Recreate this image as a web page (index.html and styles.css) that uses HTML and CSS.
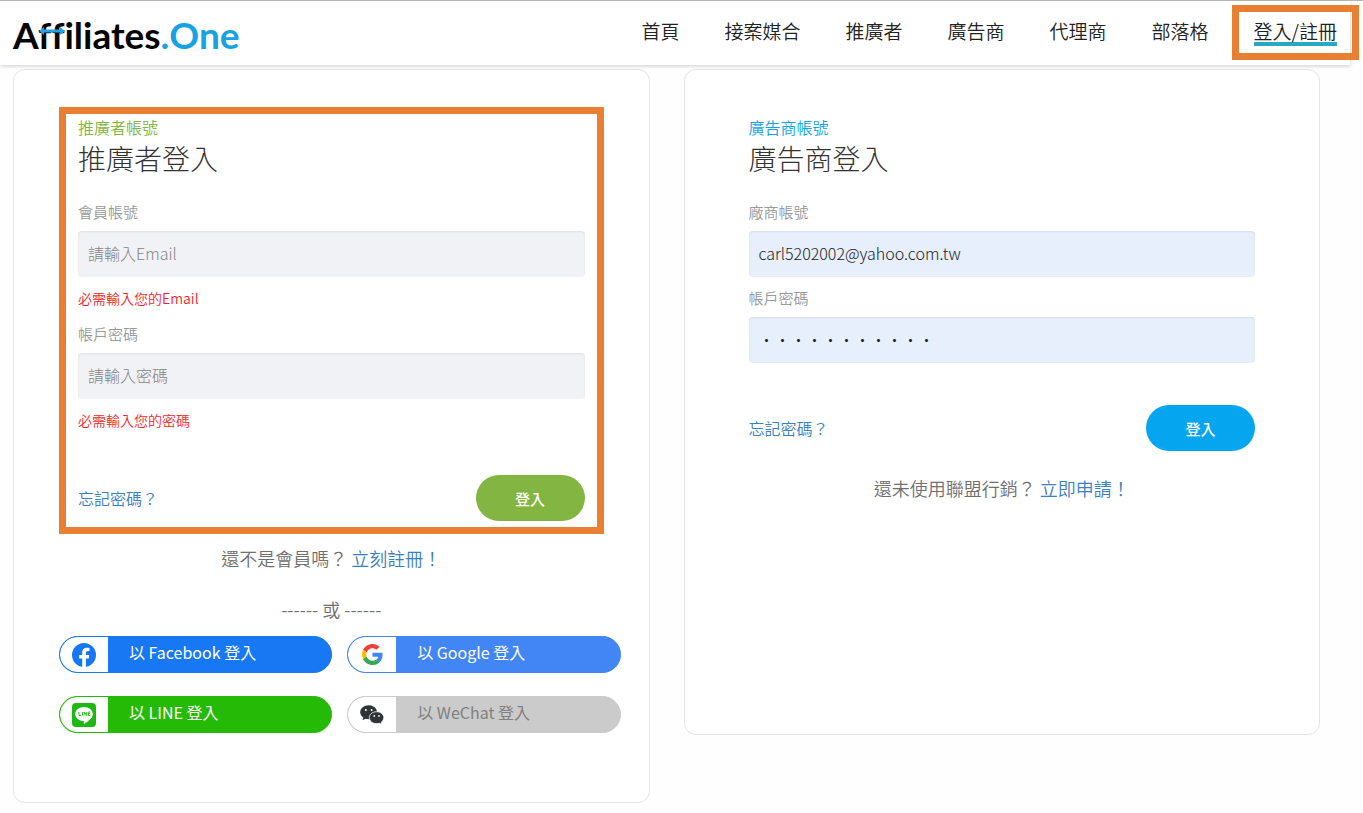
FILE: index.html
```html
<!DOCTYPE html>
<html lang="zh-Hant">
<head>
<meta charset="utf-8">
<meta name="viewport" content="width=device-width, initial-scale=1">
<title>Affiliates.One 登入</title>
<link rel="stylesheet" href="styles.css">
</head>
<body>
<header class="site-header">
  <a class="logo" href="#">
    <span class="logo-name">Affiliates</span><span class="logo-accent">.</span><span class="logo-accent logo-one">One</span>
    <svg class="logo-arrow" viewBox="0 0 26 8" aria-hidden="true"><path d="M0 4 5 0v2.500h16V0l5 4-5 4V5.500H5V8z" fill="#2b9fe6"/></svg>
  </a>
  <nav class="nav">
    <a href="#">首頁</a>
    <a href="#">接案媒合</a>
    <a href="#">推廣者</a>
    <a href="#">廣告商</a>
    <a href="#">代理商</a>
    <a href="#">部落格</a>
    <a class="nav-login" href="#"><span>登入/註冊</span></a>
  </nav>
</header>
<main class="cards">
  <section class="card">
    <form class="login login-marked">
      <p class="eyebrow eyebrow-green">推廣者帳號</p>
      <h1 class="title">推廣者登入</h1>
      <label class="label" for="member">會員帳號</label>
      <input class="input" id="member" type="text" placeholder="請輸入Email">
      <p class="error">必需輸入您的Email</p>
      <label class="label" for="member-pass">帳戶密碼</label>
      <input class="input" id="member-pass" type="password" placeholder="請輸入密碼">
      <p class="error">必需輸入您的密碼</p>
      <div class="actions actions-member">
        <a class="link" href="#">忘記密碼？</a>
        <button class="submit submit-green" type="button">登入</button>
      </div>
    </form>
    <p class="signup">還不是會員嗎？ <a class="link" href="#">立刻註冊！</a></p>
    <p class="or">------ 或 ------</p>
    <div class="socials">
      <button class="social facebook" type="button">
        <span class="social-icon"><svg viewBox="0 0 24 24" aria-hidden="true"><circle cx="12" cy="12" r="12" fill="#1877f2"/><path fill="#fff" d="M16.700 15.500l.5-3.500h-3.300V9.800c0-.9.500-1.900 2-1.900h1.500v-3s-1.400-.2-2.700-.2c-2.700 0-4.500 1.700-4.500 4.700V12h-3v3.500h3v8.400a12 12 0 0 0 3.700 0v-8.400z"/></svg></span>
        <span class="social-text">以 Facebook 登入</span>
      </button>
      <button class="social google" type="button">
        <span class="social-icon"><svg viewBox="0 0 48 48" aria-hidden="true"><path fill="#ea4335" d="M24 9.500c3.540 0 6.710 1.220 9.210 3.600l6.850-6.850C35.900 2.380 30.470 0 24 0 14.620 0 6.510 5.380 2.560 13.220l7.980 6.190C12.430 13.720 17.740 9.500 24 9.500z"/><path fill="#4285f4" d="M46.980 24.550c0-1.570-.15-3.090-.38-4.550H24v9.020h12.940c-.58 2.960-2.260 5.480-4.780 7.180l7.730 6c4.510-4.180 7.090-10.360 7.090-17.650z"/><path fill="#fbbc05" d="M10.530 28.590A14.500 14.500 0 0 1 9.770 24c0-1.600.27-3.140.76-4.590l-7.980-6.190A23.900 23.900 0 0 0 0 24c0 3.880.92 7.540 2.560 10.780z"/><path fill="#34a853" d="M24 48c6.480 0 11.930-2.130 15.890-5.810l-7.730-6c-2.150 1.450-4.920 2.300-8.160 2.300-6.260 0-11.570-4.220-13.470-9.910l-7.980 6.190C6.510 42.620 14.620 48 24 48z"/></svg></span>
        <span class="social-text">以 Google 登入</span>
      </button>
      <button class="social line" type="button">
        <span class="social-icon"><svg viewBox="0 0 24 24" aria-hidden="true"><rect width="24" height="24" rx="4" fill="#1db812"/><path fill="#fff" d="M12 4c5 0 8.800 3.100 8.800 7 0 4.500-5.600 7.900-8.300 9.700-.9.500-.8-.4-.7-1.300.1-1-.2-1.300-1-1.400-4.200-.5-7.600-3.400-7.600-7C3.200 7.100 7 4 12 4z"/><path d="M7 9v3.500h2M10.500 9v3.500M12.300 12.500V9l2.400 3.500V9M18.200 9h-1.900v3.500h1.900M16.300 10.700h1.700" fill="none" stroke="#1db812" stroke-width=".9"/></svg></span>
        <span class="social-text">以 LINE 登入</span>
      </button>
      <button class="social wechat" type="button">
        <span class="social-icon"><svg viewBox="0 0 24 24" aria-hidden="true"><path fill="#2e3438" d="M8.800 2.300C4 2.300.2 5.300.2 9.200c0 2.200 1.200 4.100 3.200 5.400l-.9 2.600 3-1.500c1.100.3 2.100.5 3.300.5C13.600 16.200 17 13 17 9.200s-3.600-6.900-8.200-6.900z"/><path fill="#2e3438" stroke="#fff" stroke-width=".8" d="M16.600 8.700c4.100 0 7.200 2.700 7.200 6 0 1.800-1 3.400-2.500 4.500l.6 2.300-2.500-1.300c-.9.300-1.800.4-2.800.4-4.100 0-7.300-2.600-7.300-5.900s3.200-6 7.300-6z"/><g fill="#fff"><circle cx="5.900" cy="6.900" r="1"/><circle cx="11.600" cy="6.900" r="1"/><circle cx="14.300" cy="12.900" r=".9"/><circle cx="19" cy="12.900" r=".9"/></g></svg></span>
        <span class="social-text">以 WeChat 登入</span>
      </button>
    </div>
  </section>
  <section class="card card-vendor">
    <form class="login">
      <p class="eyebrow eyebrow-blue">廣告商帳號</p>
      <h1 class="title">廣告商登入</h1>
      <label class="label" for="vendor">廠商帳號</label>
      <input class="input input-filled" id="vendor" type="text" value="carl5202002@yahoo.com.tw">
      <label class="label label-next" for="vendor-pass">帳戶密碼</label>
      <input class="input input-filled" id="vendor-pass" type="password" value="password123">
      <div class="actions">
        <a class="link" href="#">忘記密碼？</a>
        <button class="submit submit-blue" type="button">登入</button>
      </div>
    </form>
    <p class="signup">還未使用聯盟行銷？ <a class="link" href="#">立即申請！</a></p>
  </section>
</main>
</body>
</html>
```
FILE: styles.css
```css
* { box-sizing: border-box; }
body {
  margin: 0;
  border-top: 1px solid #b4b4b4;
  background: #fefefe;
  color: #707070;
  font-family: "Noto Sans CJK TC", sans-serif;
  font-size: 16px;
  font-weight: 350;
}
p, h1 { margin: 0; font-weight: inherit; }
a { text-decoration: none; }
button, input { font: inherit; }

.site-header {
  display: flex;
  justify-content: space-between;
  align-items: flex-start;
  height: 64px;
  margin-right: 13px;
  padding-left: 13px;
  background: #fff;
  box-shadow: 0 1px 4px rgba(0, 0, 0, .2);
}
.logo {
  position: relative;
  display: flex;
  align-items: baseline;
  padding-top: 11px;
  color: #050505;
  font: 700 37px/46px Lato, sans-serif;
  font-variant-ligatures: none;
}
.logo-accent { color: #17a3e3; }
.logo-arrow { position: absolute; left: 26px; top: 26px; width: 26px; height: 8px; }

.nav {
  display: flex;
  align-items: flex-start;
  gap: 45px;
  margin: 4px -9px 0 0;
  font-size: 19px;
  line-height: 24px;
}
.nav a { padding-top: 14px; color: #222; font-weight: 350; white-space: nowrap; }
.nav .nav-login {
  margin-left: -22px;
  padding: 7px 15px;
  border: 7px solid #e97f33;
}
.nav-login span { display: block; height: 27px; border-bottom: 4px solid #27a9c4; }

.cards {
  display: grid;
  grid-template-columns: 1fr 1fr;
  align-items: start;
  gap: 34px;
  padding: 4px 43px 10px 13px;
}
.card {
  padding: 37px 45px 69px;
  border: 1px solid #e4e4e4;
  border-radius: 12px;
  background: #fff;
}
.card-vendor { padding-bottom: 232px; }
.login {
  display: flex;
  flex-direction: column;
  padding: 0 12px 6px;
  border: 7px solid transparent;
}
.login-marked { border-color: #e97f33; }
.eyebrow { line-height: 27px; }
.eyebrow-green { color: #82b541; }
.eyebrow-blue { color: #10a5ea; }
.title { margin-bottom: 27px; color: #333; font-size: 28px; font-weight: 300; line-height: 34px; }
.label { margin-bottom: 9px; color: #999; font-size: 15px; line-height: 20px; }
.label-next { margin-top: 11px; }
.input {
  width: 100%;
  height: 46px;
  padding: 0 10px 2px;
  border: 0;
  border-radius: 4px;
  background: #f1f2f6;
  box-shadow: inset 0 1px 2px rgba(0, 0, 0, .08);
  color: #222;
  font-weight: 300;
}
.input::placeholder { color: #858585; opacity: 1; }
.input-filled { background: #e7eefc; }
.error { margin: 11px 0 16px; color: #f0282e; font-size: 14px; line-height: 20px; }
.actions {
  display: flex;
  align-items: center;
  justify-content: space-between;
  margin-top: 42px;
}
.actions-member { margin-top: 29px; }
.link { color: #3c80bd; }
.submit {
  width: 109px;
  height: 46px;
  border: 0;
  border-radius: 23px;
  color: #fff;
  font-size: 15px;
  font-weight: 500;
}
.submit-green { background: #82b541; }
.submit-blue { background: #05a5ef; }
.signup { margin-top: 10px; font-size: 18px; line-height: 28px; text-align: center; }
.or { margin: 25px 0 15px; font-size: 18px; line-height: 24px; text-align: center; }

.socials {
  display: grid;
  grid-template-columns: 1fr 1fr;
  gap: 23px 15px;
  margin-right: -17px;
}
.social {
  display: flex;
  height: 37px;
  padding: 0;
  overflow: hidden;
  border: 1px solid var(--brand);
  border-radius: 19px;
  background: var(--brand);
  color: #fff;
  font-weight: 400;
}
.social-icon {
  display: grid;
  place-items: center;
  width: 48px;
  height: 35px;
  border-radius: 18px 0 0 18px;
  background: #fff;
}
.social-icon svg { width: 24px; height: 24px; }
.social-text { padding-left: 21px; line-height: 30px; }
.facebook { --brand: #1877f2; }
.google { --brand: #4285f4; }
.google svg { width: 21px; height: 21px; }
.line { --brand: #25ba05; }
.wechat { --brand: #cbcbcb; color: #808080; }
```
